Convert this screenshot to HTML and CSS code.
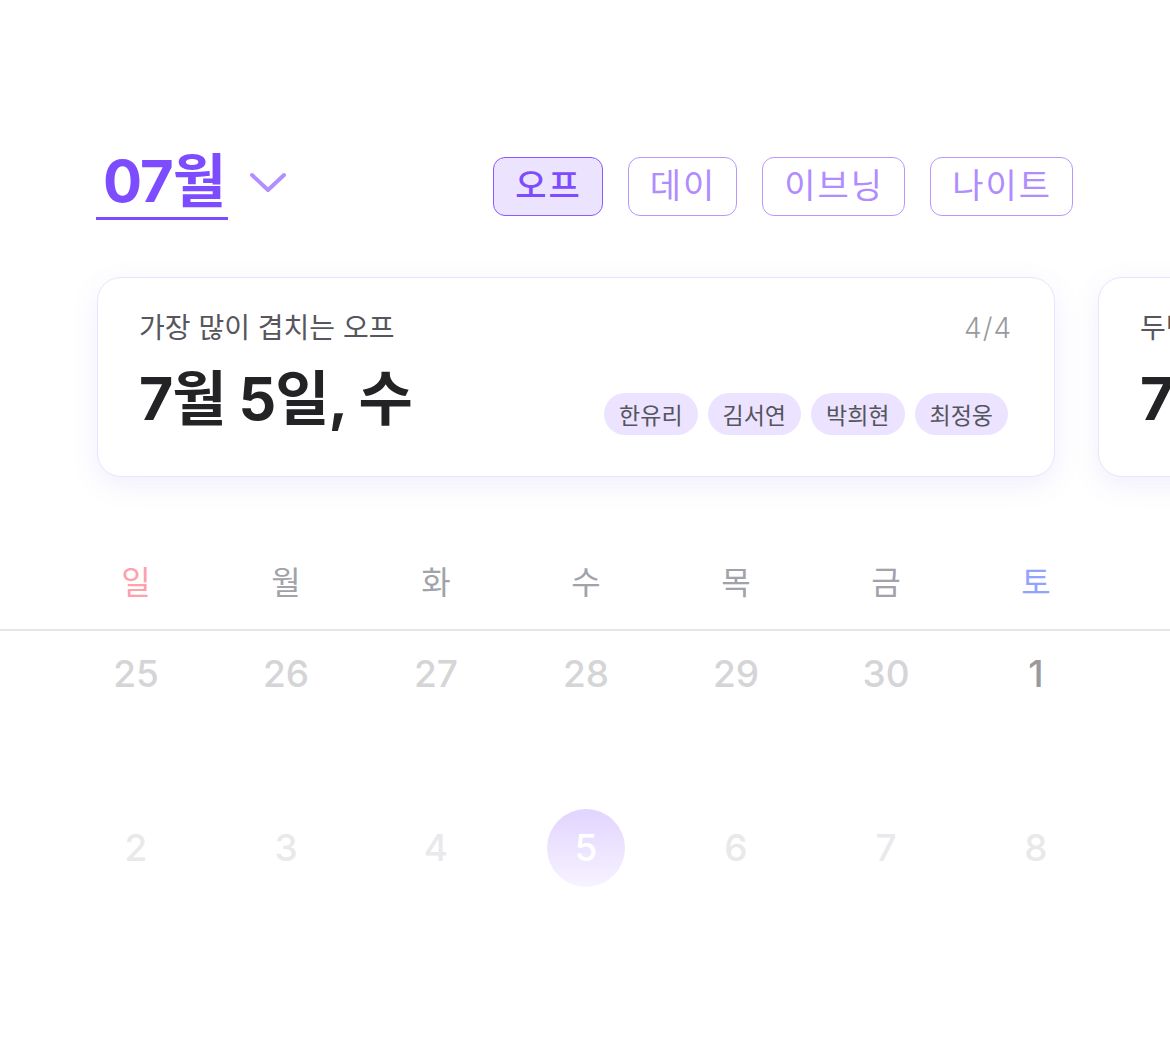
FILE: index.html
```html
<!DOCTYPE html>
<html lang="ko">
<head>
<meta charset="utf-8">
<link rel="stylesheet" href="styles.css">
</head>
<body>
<div class="page">
  <header class="top">
    <div class="month">
      <span class="month-title">07월</span>
      <svg class="chevron" width="38" height="24" viewBox="0 0 38 24"><path d="M3 4 L19 19 L35 4" fill="none" stroke="#b28eff" stroke-width="4" stroke-linecap="round" stroke-linejoin="round"/></svg>
    </div>
    <nav class="shifts">
      <button class="shift active">오프</button>
      <button class="shift">데이</button>
      <button class="shift">이브닝</button>
      <button class="shift">나이트</button>
    </nav>
  </header>

  <section class="cards">
    <article class="card">
      <div class="card-head">
        <span class="card-label">가장 많이 겹치는 오프</span>
        <span class="card-count">4/4</span>
      </div>
      <div class="card-body">
        <span class="card-date">7월 5일, 수</span>
        <div class="chips">
          <span class="chip">한유리</span>
          <span class="chip">김서연</span>
          <span class="chip">박희현</span>
          <span class="chip">최정웅</span>
        </div>
      </div>
    </article>
    <article class="card">
      <div class="card-head">
        <span class="card-label">두번째로 많이 겹치는 오프</span>
        <span class="card-count">3/4</span>
      </div>
      <div class="card-body">
        <span class="card-date">7월 12일, 수</span>
      </div>
    </article>
  </section>

  <section class="calendar">
    <div class="weekdays">
      <span class="wd sun">일</span>
      <span class="wd">월</span>
      <span class="wd">화</span>
      <span class="wd">수</span>
      <span class="wd">목</span>
      <span class="wd">금</span>
      <span class="wd sat">토</span>
    </div>
    <div class="divider"></div>
    <div class="weeks">
      <div class="week">
        <span class="day prev">25</span>
        <span class="day prev">26</span>
        <span class="day prev">27</span>
        <span class="day prev">28</span>
        <span class="day prev">29</span>
        <span class="day prev">30</span>
        <span class="day cur">1</span>
      </div>
      <div class="week">
        <span class="day faint">2</span>
        <span class="day faint">3</span>
        <span class="day faint">4</span>
        <span class="day selected"><span class="dot">5</span></span>
        <span class="day faint">6</span>
        <span class="day faint">7</span>
        <span class="day faint">8</span>
      </div>
    </div>
  </section>
</div>
</body>
</html>
```

FILE: styles.css
```css
* { box-sizing: border-box; }
html, body {
  margin: 0;
  background: #ffffff;
}
body {
  width: 1170px;
  height: 1038px;
  overflow: hidden;
  font-family: Inter, "Noto Sans CJK KR", sans-serif;
  color: #222226;
}
.page {
  width: 1170px;
}
.top {
  display: flex;
  align-items: center;
  justify-content: space-between;
  padding: 152px 97px 0 96px;
}
.month {
  display: flex;
  align-items: center;
  gap: 21px;
}
.month-title {
  font-size: 58px;
  font-weight: 700;
  line-height: 1;
  color: #7d4cff;
  padding: 0 3px 7px 7px;
  border-bottom: 3px solid #7d4cff;
  letter-spacing: -1px;
}
.chevron {
  display: block;
  margin-top: -6px;
}
.shifts {
  display: flex;
  gap: 25px;
}
.shift {
  font-family: Inter, "Noto Sans CJK KR", sans-serif;
  height: 59px;
  padding: 0 20px 0 21px;
  font-size: 34px;
  font-weight: 400;
  line-height: 1;
  letter-spacing: 2px;
  color: #b08cff;
  background: #ffffff;
  border: 1.5px solid #b896ff;
  border-radius: 12px;
}
.shift.active {
  color: #7d4cff;
  background: #ece3ff;
  border-color: #8d5aff;
  font-weight: 500;
}
.cards {
  display: flex;
  gap: 43px;
  padding: 57px 0 0 97px;
}
.card {
  flex: 0 0 958px;
  height: 200px;
  background: #ffffff;
  border: 1.5px solid #ebe3ff;
  border-radius: 24px;
  box-shadow: 0 8px 28px rgba(120, 90, 220, 0.1);
  padding: 32px 42px 0 41px;
}
.card-head {
  display: flex;
  justify-content: space-between;
  align-items: center;
  font-size: 28px;
  line-height: 36px;
}
.card-label {
  color: #56565c;
}
.card-count {
  color: #9a9aa0;
  font-weight: 300;
  letter-spacing: 1px;
}
.card-body {
  display: flex;
  justify-content: space-between;
  align-items: flex-start;
  margin-top: 23px;
}
.card-date {
  font-size: 59px;
  font-weight: 700;
  line-height: 1;
  color: #232326;
  letter-spacing: -1px;
}
.chips {
  display: flex;
  gap: 10px;
  margin-right: 4px;
  margin-top: 24px;
}
.chip {
  height: 42px;
  padding: 0 15px;
  display: flex;
  align-items: center;
  font-size: 23px;
  color: #55555b;
  background: #ebe3ff;
  border-radius: 21px;
}
.calendar {
  margin-top: 79px;
}
.weekdays, .week {
  display: grid;
  grid-template-columns: repeat(7, 150px);
  padding-left: 61px;
}
.wd {
  text-align: center;
  font-size: 32px;
  line-height: 54px;
  color: #a2a2aa;
}
.wd.sun { color: #ffa0ad; }
.wd.sat { color: #91a2ff; }
.divider {
  height: 2px;
  background: #e5e5ea;
  margin-top: 19px;
}
.weeks {
  padding-top: 4px;
}
.week {
  height: 174px;
  align-items: start;
}
.day {
  text-align: center;
  font-size: 37px;
  font-weight: 500;
  line-height: 78px;
  height: 78px;
}
.day.prev { color: #d5d5d8; }
.day.cur { color: #9a9a9e; }
.day.faint { color: #e9e9eb; }
.day.selected {
  display: flex;
  justify-content: center;
}
.dot {
  width: 78px;
  height: 78px;
  border-radius: 50%;
  background: linear-gradient(180deg, #e1d4ff 0%, #f7f3ff 100%);
  color: #ffffff;
  line-height: 78px;
  text-align: center;
}
```
